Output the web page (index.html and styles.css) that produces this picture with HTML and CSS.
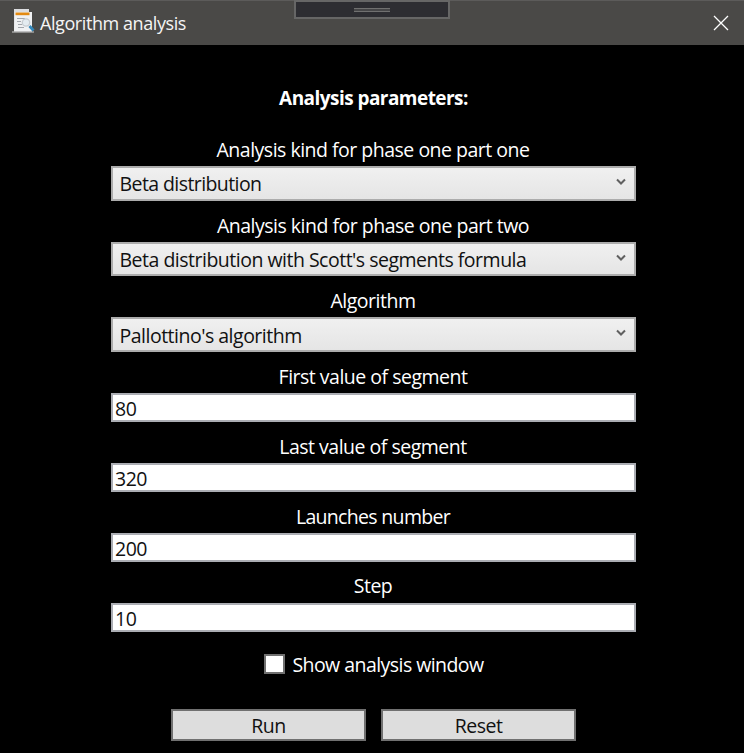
FILE: index.html
```
<!DOCTYPE html>
<html lang="en">
<head>
<meta charset="utf-8">
<title>Algorithm analysis</title>
<link rel="stylesheet" href="styles.css">
</head>
<body>
<header class="titlebar">
  <svg class="app-icon" viewBox="0 0 24 26">
    <path d="M3 0h15v3h2v20H3z" fill="#dcdde0"/>
    <path d="M4 3h17v20H3z" fill="#f0f1f3"/>
    <path d="M1 23h22" stroke="#a9a9a9" stroke-width="1.4"/>
    <path d="M4.500 3.500h14v2.700h-14z" fill="#e38a12"/>
    <path d="M6 9.500h8M6 12.500h4M7 15.500h4M7 18.500h6" stroke="#a2a6ac" stroke-width="1"/>
    <circle cx="15" cy="13.500" r="3.700" fill="#e4ebf0" stroke="#c6ccd1" stroke-width="1.300"/>
    <path d="M18.500 17l4 4.500" stroke="#3487b9" stroke-width="2.800"/>
  </svg>
  <span class="title">Algorithm analysis</span>
  <div class="grip"><i></i></div>
  <svg class="close" viewBox="0 0 16 16"><path d="M1 1l14 14M15 1L1 15" stroke="#fff" stroke-width="1.3"/></svg>
</header>
<main class="form">
  <h1>Analysis parameters:</h1>
  <label>Analysis kind for phase one part one</label>
  <div class="select"><span class="narrow">Beta distribution</span><svg viewBox="0 0 10 8"><path d="M1 1.500l4 4 4-4" fill="none" stroke="#606060" stroke-width="2"/></svg></div>
  <label>Analysis kind for phase one part two</label>
  <div class="select"><span>Beta distribution with Scott's segments formula</span><svg viewBox="0 0 10 8"><path d="M1 1.500l4 4 4-4" fill="none" stroke="#606060" stroke-width="2"/></svg></div>
  <label>Algorithm</label>
  <div class="select"><span>Pallottino's algorithm</span><svg viewBox="0 0 10 8"><path d="M1 1.500l4 4 4-4" fill="none" stroke="#606060" stroke-width="2"/></svg></div>
  <label>First value of segment</label>
  <div class="input">80</div>
  <label>Last value of segment</label>
  <div class="input">320</div>
  <label class="tight">Launches number</label>
  <div class="input">200</div>
  <label class="last">Step</label>
  <div class="input last-input">10</div>
  <div class="check"><i></i><span>Show analysis window</span></div>
  <div class="buttons"><button>Run</button><button>Reset</button></div>
</main>
</body>
</html>
```
FILE: styles.css
```
* { box-sizing: border-box; }
body {
  margin: 0;
  height: 753px;
  background: #000;
  color: #fff;
  font: 19.5px/28px "Open Sans", "Noto Sans", sans-serif;
  letter-spacing: -0.5px;
  overflow: hidden;
}
.titlebar {
  position: relative;
  height: 45px;
  background: #4a4947;
  border-top: 1px solid #5c5b5a;
  display: flex;
  align-items: center;
}
.app-icon { width: 24px; height: 26px; margin: 0 0 3px 11px; }
.title { margin-left: 5px; flex: 1; font-size: 18px; letter-spacing: -0.42px; color: #f5f5f5; }
.close { width: 16px; height: 16px; margin-right: 15px; }
.grip {
  position: absolute;
  left: 294px;
  top: -1px;
  width: 156px;
  height: 19px;
  background: #2d2d32;
  border: 2px solid #666;
  display: flex;
  align-items: center;
  justify-content: center;
}
.grip i { width: 36px; height: 4px; margin-top: 1px; border: solid #707070; border-width: 1px 0; background: #464648; }
.form {
  width: 525px;
  margin-left: 111px;
  display: flex;
  flex-direction: column;
  align-items: center;
}
h1 { font-size: 19px; line-height: 28px; letter-spacing: -0.55px; margin: 39px 0 12px; }
label { margin: 11px 0 2px; padding-right: 1px; }
h1 + label { margin-top: 12px; }
label.last { margin: 10px 0 3px; }
.tight { letter-spacing: -0.68px; }
.select {
  width: 100%;
  height: 34.700px;
  border: 2px solid #acacac;
  background: linear-gradient(#f0f0f0, #e5e5e5);
  color: #111;
  display: flex;
  align-items: center;
  justify-content: space-between;
  padding: 0 8px 0 6.500px;
}
.select span { padding-top: 2px; }
.select .narrow { letter-spacing: -0.58px; }
.select svg { width: 10px; height: 8px; margin-bottom: 3px; }
.input {
  width: 100%;
  height: 29px;
  border: 2px solid #abadb3;
  background: #fff;
  color: #111;
  line-height: 28px;
  padding-left: 2px;
}
.last-input { line-height: 27px; }
.check { display: flex; align-items: center; gap: 7px; height: 28px; margin-top: 19px; padding-left: 1px; letter-spacing: -0.55px; }
.check i { width: 21px; height: 20px; margin-bottom: 2px; background: #fff; border: 2px solid #707070; }
.buttons { display: flex; gap: 15px; margin-top: 30px; }
button {
  width: 195px;
  height: 32px;
  padding: 1px 0 0;
  border: 2px solid #707070;
  border-radius: 0;
  background: #ddd;
  color: #111;
  font: inherit;
  letter-spacing: inherit;
}
```
